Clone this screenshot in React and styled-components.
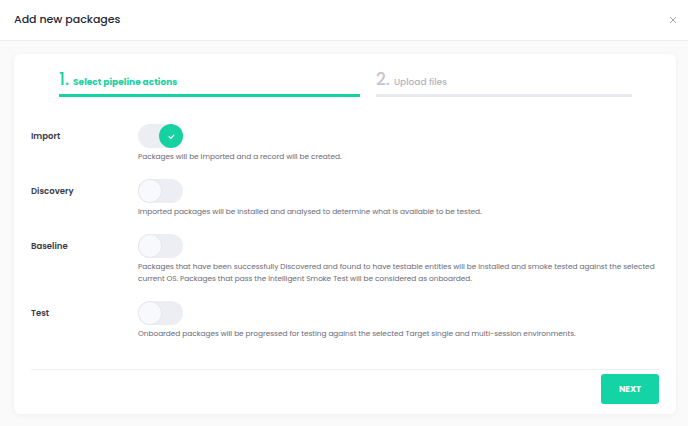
import styled, { createGlobalStyle } from "styled-components";

const GlobalStyle = createGlobalStyle`
  body {
    margin: 0;
    background: #ffffff;
    font-family: "Poppins", "Noto Sans", "DejaVu Sans", sans-serif;
  }
`;

const Modal = styled.div`
  width: 688px;
  height: 426px;
  display: flex;
  flex-direction: column;
  background: #ffffff;
`;

const Header = styled.div`
  flex-shrink: 0;
  height: 41px;
  box-sizing: border-box;
  display: flex;
  align-items: center;
  justify-content: space-between;
  padding: 0 10px 1px 14px;
  border-bottom: 1px solid #eceef2;
`;

const Title = styled.h2`
  margin: 0;
  font-size: 11px;
  font-weight: 500;
  color: #262837;
`;

const Close = styled.button`
  border: none;
  background: none;
  padding: 0;
  width: 10px;
  height: 10px;
  display: flex;
  align-items: center;
  justify-content: center;
  color: #a3a4ae;
`;

const Body = styled.div`
  flex: 1;
  background: #fafafb;
  padding: 13px 12px 13px 14px;
`;

const Card = styled.div`
  background: #ffffff;
  border-radius: 6px;
  box-shadow: 0 1px 6px rgba(30, 35, 60, 0.05);
  padding: 0 17px 10px 17px;
  display: flex;
  flex-direction: column;
`;

const Steps = styled.div`
  display: flex;
  gap: 16px;
  padding: 14px 0 0 28px;
`;

const Step = styled.div`
  width: ${(p) => p.$width}px;
  display: flex;
  align-items: baseline;
  gap: 4px;
  padding-bottom: 4px;
  border-bottom: 3px solid ${(p) => (p.$active ? "#16d2a3" : "#e9eaf0")};
`;

const StepNum = styled.span`
  font-size: 17px;
  font-weight: 500;
  line-height: 22px;
  color: ${(p) => (p.$active ? "#16d2a3" : "#c4c5ce")};
`;

const StepLabel = styled.span`
  font-size: 9px;
  font-weight: ${(p) => (p.$active ? 700 : 500)};
  color: ${(p) => (p.$active ? "#16d2a3" : "#b3b4bf")};
`;

const Actions = styled.div`
  display: flex;
  flex-direction: column;
  gap: 16px;
  padding-top: 27px;
`;

const Row = styled.div`
  display: grid;
  grid-template-columns: 107px 1fr;
  align-items: start;
`;

const Label = styled.div`
  height: 24px;
  display: flex;
  align-items: center;
  font-size: 8.5px;
  font-weight: 600;
  color: #3a3b4a;
`;

const Content = styled.div`
  display: flex;
  flex-direction: column;
  gap: 3px;
`;

const Track = styled.div`
  width: 45px;
  height: 24px;
  border-radius: 12px;
  background: #eceef4;
  display: flex;
  align-items: center;
  justify-content: ${(p) => (p.$on ? "flex-end" : "flex-start")};
  padding: 0 1px;
  box-sizing: border-box;
`;

const Knob = styled.div`
  width: ${(p) => (p.$on ? 24 : 22)}px;
  height: ${(p) => (p.$on ? 24 : 22)}px;
  border-radius: 50%;
  background: ${(p) => (p.$on ? "#16d2a3" : "#f8f9fc")};
  box-shadow: ${(p) => (p.$on ? "none" : "0 0 0 1px #e6e8ef")};
  display: flex;
  align-items: center;
  justify-content: center;
  margin-right: ${(p) => (p.$on ? "-1px" : "0")};
`;

const Desc = styled.p`
  margin: 0;
  font-size: 7.35px;
  line-height: 12px;
  color: #676877;
  max-width: 530px;
`;

const Footer = styled.div`
  margin-top: 29px;
  border-top: 1px solid #eef0f4;
  padding-top: 4px;
  display: flex;
  justify-content: flex-end;
`;

const NextButton = styled.button`
  width: 58px;
  height: 30px;
  border: none;
  border-radius: 3px;
  background: #14d3a4;
  color: #ffffff;
  font-family: inherit;
  font-size: 8.5px;
  font-weight: 700;
`;

const actions = [
  {
    name: "Import",
    on: true,
    text: "Packages will be imported and a record will be created.",
  },
  {
    name: "Discovery",
    on: false,
    text: "Imported packages will be installed and analysed to determine what is available to be tested.",
  },
  {
    name: "Baseline",
    on: false,
    text: "Packages that have been successfully Discovered and found to have testable entities will be installed and smoke tested against the selected current OS. Packages that pass the Intelligent Smoke Test will be considered as onboarded.",
  },
  {
    name: "Test",
    on: false,
    text: "Onboarded packages will be progressed for testing against the selected Target single and multi-session environments.",
  },
];

const Toggle = ({ on }) => (
  <Track $on={on}>
    <Knob $on={on}>
      {on && (
        <svg width="9" height="9" viewBox="0 0 10 10">
          <path d="M2.4 5.2 L4.3 7 L7.6 3.4" fill="none" stroke="#fff" strokeWidth="1.4" strokeLinecap="round" strokeLinejoin="round" />
        </svg>
      )}
    </Knob>
  </Track>
);

const App = () => {
  return (
    <Modal>
      <GlobalStyle />
      <Header>
        <Title>Add new packages</Title>
        <Close>
          <svg width="8" height="8" viewBox="0 0 8 8">
            <path d="M1 1 L7 7 M7 1 L1 7" stroke="currentColor" strokeWidth="1" />
          </svg>
        </Close>
      </Header>
      <Body>
        <Card>
          <Steps>
            <Step $active $width={301}>
              <StepNum $active>1.</StepNum>
              <StepLabel $active>Select pipeline actions</StepLabel>
            </Step>
            <Step $width={256}>
              <StepNum>2.</StepNum>
              <StepLabel>Upload files</StepLabel>
            </Step>
          </Steps>
          <Actions>
            {actions.map((a) => (
              <Row key={a.name}>
                <Label>{a.name}</Label>
                <Content>
                  <Toggle on={a.on} />
                  <Desc>{a.text}</Desc>
                </Content>
              </Row>
            ))}
          </Actions>
          <Footer>
            <NextButton>NEXT</NextButton>
          </Footer>
        </Card>
      </Body>
    </Modal>
  );
};

export default App;
